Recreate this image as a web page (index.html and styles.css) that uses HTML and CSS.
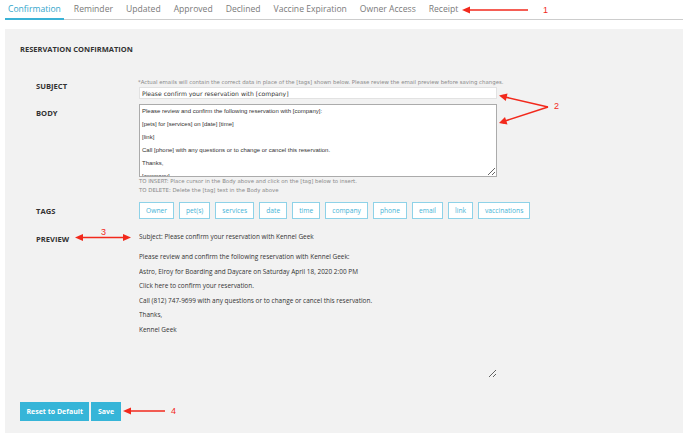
FILE: index.html
```html
<!DOCTYPE html>
<html>
<head>
<meta charset="utf-8">
<link rel="stylesheet" href="styles.css">
</head>
<body>
<nav class="tabs">
  <span class="tab active">Confirmation</span>
  <span class="tab">Reminder</span>
  <span class="tab">Updated</span>
  <span class="tab">Approved</span>
  <span class="tab">Declined</span>
  <span class="tab">Vaccine Expiration</span>
  <span class="tab">Owner Access</span>
  <span class="tab">Receipt</span>
</nav>
<main class="panel">
  <h1 class="title">RESERVATION CONFIRMATION</h1>
  <div class="row row-subject">
    <div class="label">SUBJECT</div>
    <div class="field">
      <div class="note">*Actual emails will contain the correct data in place of the [tags] shown below. Please review the email preview before saving changes.</div>
      <input class="input" type="text" value="Please confirm your reservation with [company]">
    </div>
  </div>
  <div class="row row-body">
    <div class="label">BODY</div>
    <div class="field">
      <textarea class="textarea">Please review and confirm the following reservation with [company]:
[pets] for [services] on [date] [time]
[link]
Call [phone] with any questions or to change or cancel this reservation.
Thanks,
[company]</textarea>
      <div class="help">TO INSERT: Place cursor in the Body above and click on the [tag] below to insert.</div>
      <div class="help">TO DELETE: Delete the [tag] text in the Body above</div>
    </div>
  </div>
  <div class="row row-tags">
    <div class="label">TAGS</div>
    <div class="field tags">
      <span class="tag">Owner</span>
      <span class="tag">pet(s)</span>
      <span class="tag">services</span>
      <span class="tag">date</span>
      <span class="tag">time</span>
      <span class="tag">company</span>
      <span class="tag">phone</span>
      <span class="tag">email</span>
      <span class="tag">link</span>
      <span class="tag">vaccinations</span>
    </div>
  </div>
  <div class="row row-preview">
    <div class="label">PREVIEW</div>
    <div class="field preview">
      <p class="pv first">Subject: Please confirm your reservation with Kennel Geek</p>
      <p class="pv gap">Please review and confirm the following reservation with Kennel Geek:</p>
      <p class="pv">Astro, Elroy for Boarding and Daycare on Saturday April 18, 2020 2:00 PM</p>
      <p class="pv">Click here to confirm your reservation.</p>
      <p class="pv">Call (812) 747-9699 with any questions or to change or cancel this reservation.</p>
      <p class="pv">Thanks,</p>
      <p class="pv">Kennel Geek</p>
    </div>
  </div>
  <div class="actions">
    <button class="btn">Reset to Default</button>
    <button class="btn">Save</button>
  </div>
</main>
<svg class="annot" width="688" height="433" viewBox="0 0 688 433">
  <g stroke="#f2291c" stroke-width="1.6" fill="#f2291c">
    <line x1="467" y1="10" x2="528" y2="10"/>
    <polygon points="462,10 470,6.5 470,13.5" stroke="none"/>
    <line x1="548" y1="107" x2="505" y2="97"/>
    <polygon points="499,95.5 507.5,93.5 505.8,101" stroke="none"/>
    <line x1="548" y1="107" x2="505" y2="121"/>
    <polygon points="499,123 505,117 507.5,124.5" stroke="none"/>
    <line x1="81" y1="237.5" x2="126" y2="237.5"/>
    <polygon points="75,237.5 83,234 83,241" stroke="none"/>
    <polygon points="131,237.5 123,234 123,241" stroke="none"/>
    <line x1="128" y1="411" x2="165" y2="411"/>
    <polygon points="123,411 131,407.5 131,414.5" stroke="none"/>
  </g>
  <g class="nums" fill="#f2291c">
    <text x="543" y="13">1</text>
    <text x="554" y="109">2</text>
    <text x="101" y="235">3</text>
    <text x="171" y="414">4</text>
  </g>
</svg>
</body>
</html>
```

FILE: styles.css
```css
* { box-sizing: border-box; }
html, body { margin: 0; padding: 0; }
body {
  width: 688px;
  height: 433px;
  overflow: hidden;
  position: relative;
  background: #ffffff;
  font-family: "Open Sans", "DejaVu Sans", sans-serif;
  color: #444;
}
.tabs {
  display: flex;
  margin: 0 5px;
  height: 20px;
  border-bottom: 1px solid #cdcdcd;
  gap: 7px;
}
.tab {
  font-size: 8.6px;
  line-height: 19px;
  padding: 0 3px;
  color: #7a7a7a;
  white-space: nowrap;
}
.tab.active {
  color: #33a6cc;
  border-bottom: 2px solid #3ab2d6;
  height: 20px;
}
.panel {
  margin: 9px 5px 0;
  height: 404px;
  background: #f2f2f2;
  padding: 15px 15px 0;
}
.title {
  margin: 0;
  font-size: 7.5px;
  line-height: 10px;
  font-weight: 700;
  color: #333;
}
.row {
  display: flex;
  margin-left: 16px;
}
.label {
  width: 103px;
  flex: none;
  font-size: 7.6px;
  line-height: 10px;
  font-weight: 700;
  color: #333;
}
.field { width: 358px; flex: none; }
.row-subject { margin-top: 24px; }
.row-subject .label { padding-top: 3px; }
.note, .help {
  font-family: "DejaVu Sans", sans-serif;
  font-size: 5.4px;
  line-height: 9px;
  color: #8a8a8a;
  white-space: nowrap;
}
.note { margin-left: -1px; }
.input {
  display: block;
  width: 358px;
  height: 12px;
  margin: 0;
  padding: 0 2px;
  border: 1px solid #e2e2e2;
  background: #fff;
  font-family: "DejaVu Sans", sans-serif;
  font-size: 6.1px;
  color: #333;
  outline: none;
}
.row-body { margin-top: 5px; }
.row-body .label { padding-top: 4px; }
.textarea {
  display: block;
  width: 358px;
  height: 73px;
  margin: 0;
  padding: 0 2px;
  border: 1px solid #ababab;
  background: #fff;
  font-family: "Liberation Sans", Arial, sans-serif;
  font-size: 6px;
  line-height: 13px;
  color: #333;
  resize: vertical;
  overflow: hidden;
  outline: none;
}
.row-tags { margin-top: 7px; align-items: center; }
.tags { display: flex; gap: 5px; width: auto; }
.tag {
  height: 17px;
  line-height: 15px;
  padding: 0 6px;
  border: 1px solid #8ed2e8;
  background: #fff;
  color: #45b3d6;
  font-size: 6.7px;
}
.row-preview { margin-top: 11px; }
.row-preview .label { padding-top: 4px; }
.preview {
  height: 148px;
  resize: both;
  overflow: auto;
  scrollbar-width: none;
}
.pv {
  margin: 0;
  font-size: 6.45px;
  line-height: 14.5px;
  color: #333;
  white-space: nowrap;
}
.pv.gap { margin-top: 5.5px; }
.actions {
  display: flex;
  gap: 2px;
  margin-top: 24px;
}
.btn {
  height: 19px;
  padding: 0 6.5px;
  border: none;
  background: #36b5d8;
  color: #fff;
  font-family: "Open Sans", sans-serif;
  font-weight: 700;
  font-size: 7px;
}
.annot {
  position: absolute;
  left: 0;
  top: 0;
  pointer-events: none;
}
.nums text {
  font-family: "Liberation Sans", Arial, sans-serif;
  font-size: 9px;
}
```
